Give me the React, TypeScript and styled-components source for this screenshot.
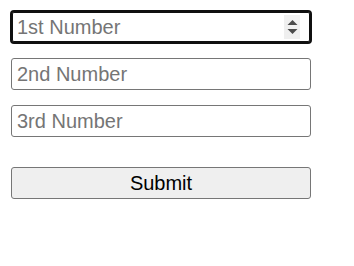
import React from 'react';
import styled, { createGlobalStyle } from 'styled-components';

const GlobalStyle = createGlobalStyle`
    body {
        margin: 0;
        background: #ffffff;
        font-family: "Liberation Sans", Arial, sans-serif;
    }
`;

const App = () => {
    const fields = ['1st Number', '2nd Number', '3rd Number'];

    return (
        <>
            <GlobalStyle />
            <StyledForm onSubmit={(e) => e.preventDefault()}>
                {fields.map((label, i) => (
                    <StyledField key={label}>
                        <StyledNumberInput type="number" placeholder={label} $active={i === 0} />
                        {i === 0 && (
                            <StyledSpinner aria-hidden="true">
                                <svg width="11" height="16" viewBox="0 0 11 16">
                                    <path d="M5.5 1 L10.5 6 L0.5 6 Z" fill="#4a4a4a" />
                                    <path d="M0.5 10 L10.5 10 L5.5 15 Z" fill="#4a4a4a" />
                                </svg>
                            </StyledSpinner>
                        )}
                    </StyledField>
                ))}
                <StyledSubmitButton type="submit">Submit</StyledSubmitButton>
            </StyledForm>
        </>
    );
};

const StyledForm = styled.form`
    display: flex;
    flex-direction: column;
    align-items: flex-start;
    gap: 15px;
    padding: 11px;
`;

const StyledField = styled.div`
    position: relative;
    width: 300px;
    height: 32px;
`;

const StyledNumberInput = styled.input<{ $active?: boolean }>`
    box-sizing: border-box;
    width: 300px;
    height: 32px;
    margin: 0;
    padding: 0 8px 0 5px;
    border: 1px solid ${({ $active }) => ($active ? '#101010' : '#767676')};
    border-radius: 3px;
    font-family: "Liberation Sans", Arial, sans-serif;
    font-size: 20px;
    color: #000000;
    background: #ffffff;
    outline: ${({ $active }) => ($active ? '2px solid #101010' : 'none')};
    outline-offset: -1px;
    box-shadow: ${({ $active }) => ($active ? 'inset 0 0 0 1px #101010' : 'none')};
    -moz-appearance: textfield;

    &::placeholder {
        color: #757575;
    }

    &::-webkit-inner-spin-button,
    &::-webkit-outer-spin-button {
        -webkit-appearance: none;
        margin: 0;
    }
`;

const StyledSpinner = styled.span`
    position: absolute;
    right: 11px;
    top: 4px;
    width: 16px;
    height: 24px;
    display: flex;
    align-items: center;
    justify-content: center;
    background: #efefef;
    pointer-events: none;
`;

const StyledSubmitButton = styled.button`
    box-sizing: border-box;
    width: 300px;
    height: 32px;
    margin-top: 15px;
    border: 1px solid #767676;
    border-radius: 3px;
    background: #efefef;
    color: #000000;
    font-family: "Liberation Sans", Arial, sans-serif;
    font-size: 20px;
    padding: 0;
`;

export default App;
